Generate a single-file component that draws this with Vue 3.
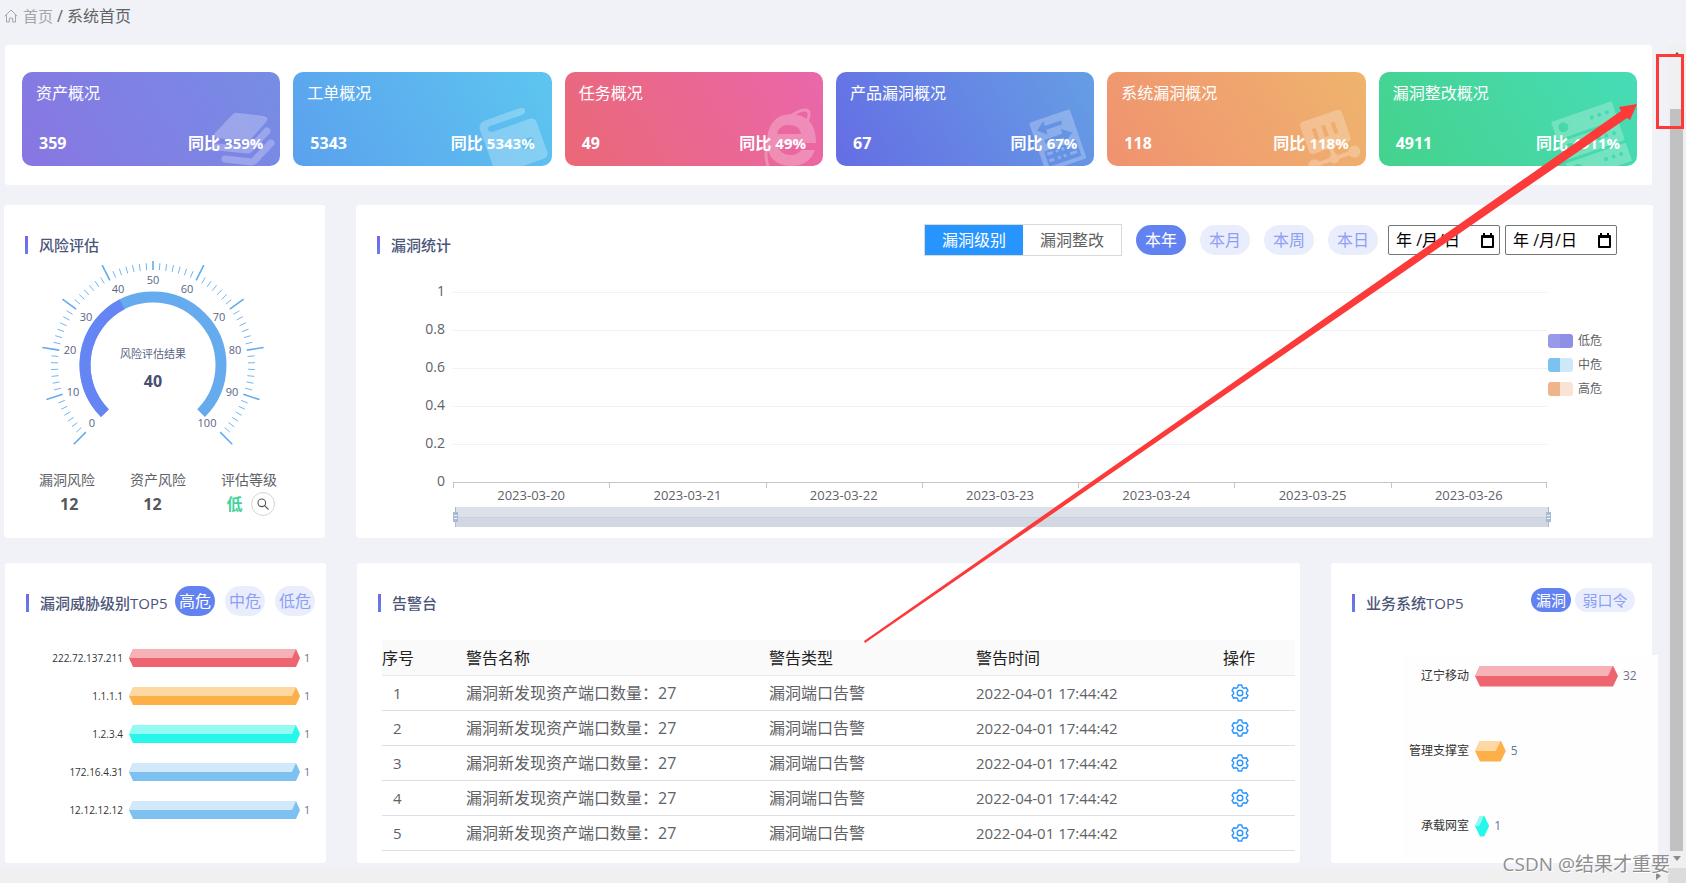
<script setup>
import { ref } from 'vue'

const cards = [
  { key: 'asset', title: '资产概况', value: 359 },
  { key: 'order', title: '工单概况', value: 5343 },
  { key: 'task', title: '任务概况', value: 49 },
  { key: 'product', title: '产品漏洞概况', value: 67 },
  { key: 'system', title: '系统漏洞概况', value: 118 },
  { key: 'fix', title: '漏洞整改概况', value: 4911 },
]

const CX = 149
const CY = 111
const polar = (r, value) => {
  const a = ((135 + value * 2.7) * Math.PI) / 180
  return [CX + r * Math.cos(a), CY + r * Math.sin(a)]
}
const arc = (from, to) => {
  const [x1, y1] = polar(68, from)
  const [x2, y2] = polar(68, to)
  const large = (to - from) * 2.7 > 180 ? 1 : 0
  return `M${x1} ${y1}A68 68 0 ${large} 1 ${x2} ${y2}`
}
const ticks = Array.from({ length: 71 }, (_, i) => {
  const major = i % 7 === 0
  const v = (i * 10) / 7
  const [x1, y1] = polar(95, v)
  const [x2, y2] = polar(major ? 112 : 102, v)
  return { x1, y1, x2, y2, major }
})
const gaugeLabels = [
  [0, 88, 173], [10, 69, 142], [20, 66, 100], [30, 82, 67], [40, 114, 39], [50, 149, 30],
  [60, 183, 39], [70, 215, 67], [80, 231, 100], [90, 228, 142], [100, 203, 173],
]

const yLabels = ['1', '0.8', '0.6', '0.4', '0.2', '0']
const dates = ['2023-03-20', '2023-03-21', '2023-03-22', '2023-03-23', '2023-03-24', '2023-03-25', '2023-03-26']
const legend = [
  { name: '低危', cls: 'low' },
  { name: '中危', cls: 'mid' },
  { name: '高危', cls: 'high' },
]

const statTab = ref('漏洞级别')
const period = ref('本年')
const level = ref('高危')
const bizTab = ref('漏洞')
const startDate = ref('年 /月/日')
const endDate = ref('年 /月/日')

const threats = [
  { name: '222.72.137.211', value: 1, cls: 'red' },
  { name: '1.1.1.1', value: 1, cls: 'orange' },
  { name: '1.2.3.4', value: 1, cls: 'cyan' },
  { name: '172.16.4.31', value: 1, cls: 'blue' },
  { name: '12.12.12.12', value: 1, cls: 'blue' },
]
const systems = [
  { name: '辽宁移动', value: 32, cls: 'red' },
  { name: '管理支撑室', value: 5, cls: 'orange' },
  { name: '承载网室', value: 1, cls: 'cyan' },
]
const alarms = [1, 2, 3, 4, 5].map((no) => ({
  no,
  name: '漏洞新发现资产端口数量：27',
  type: '漏洞端口告警',
  time: '2022-04-01 17:44:42',
}))
</script>

<template>
  <div class="page">
    <nav class="crumbs">
      <a href="#" class="home">
        <svg width="14" height="14" viewBox="0 0 14 14" fill="none" stroke="currentColor" stroke-width="1">
          <path d="M.7 7.2 7 1l6.300 6.200M2.500 6v7h2.800V9.200h3.400M8.700 9.200V13h2.800V6" />
        </svg>
        <span>首页</span>
      </a>
      <span class="slash">/</span>
      <span class="current">系统首页</span>
    </nav>

    <div class="body">
      <main class="content">
        <section class="panel overview">
          <article v-for="c in cards" :key="c.key" class="card" :class="c.key">
            <h3>{{ c.title }}</h3>
            <div class="figures">
              <strong>{{ c.value }}</strong>
              <b>同比 <span>{{ c.value }}%</span></b>
            </div>
            <svg class="mark" width="80" height="70" viewBox="0 0 80 70" fill="#fff">
              <g v-if="c.key === 'asset'">
                <path d="M38 17 64 20Q70 22 66 26L51 43Q49 46 45 45L17 42Q12 41 15 37L32 19Q34 16 38 17Z" />
                <path d="M18 51 47 54Q49 54 51 52L67 35M25 63 51 66Q53 66 55 64L71 47" fill="none" stroke="#fff" stroke-width="7" stroke-linecap="round" stroke-linejoin="round" />
              </g>
              <g v-else-if="c.key === 'order'">
                <path fill-rule="evenodd" d="M8 34Q6 28 12 25L48 12Q52 11 53 14T50 19L18 30Q15 32 16 34T20 36L57 23Q63 21 65 27L75 55Q77 61 71 63L51 70H21ZM50 45Q48 49 51 52T58 52L63 50 60 41 53 43Q51 43 50 45Z" />
              </g>
              <g v-else-if="c.key === 'task'">
                <path fill-rule="evenodd" d="M73 47H34Q36 59 48 59 55 59 58 54H72Q66 70 48 70 24 69 24 45 25 19 48 18 73 19 73 47ZM34 38H58Q57 29 46 29T34 38Z" />
                <path d="M25 70Q18 50 35 32T62 14Q69 14 64 26" fill="none" stroke="#fff" stroke-width="3" />
              </g>
              <g v-else-if="c.key === 'product'">
                <mask id="productCut" maskUnits="userSpaceOnUse" x="-10" y="-10" width="100" height="90">
                  <rect x="-10" y="-10" width="100" height="90" fill="#fff" />
                  <g fill="#000">
                    <path d="M5 10 14 3V8H31V12H14V17ZM38 23 28 16V21H9V25H28V30Z" />
                    <path d="M5 32H39V48H5Z" />
                  </g>
                  <g fill="#fff">
                    <rect x="7" y="34" width="6" height="3" /><rect x="16" y="34" width="3" height="3" /><rect x="22" y="34" width="3" height="3" /><rect x="28" y="34" width="8" height="3" />
                    <rect x="7" y="41" width="5" height="3" /><rect x="16" y="41" width="3" height="3" /><rect x="22" y="41" width="3" height="3" /><rect x="29" y="41" width="7" height="3" />
                  </g>
                </mask>
                <g transform="translate(15 27) rotate(-19)">
                  <rect width="43" height="52" rx="2" mask="url(#productCut)" />
                </g>
              </g>
              <g v-else-if="c.key === 'system'">
                <g transform="translate(13 27) rotate(-19)">
                  <path fill-rule="evenodd" d="M4 0H40Q44 0 44 4V30Q44 34 40 34H4Q0 34 0 30V4Q0 0 4 0ZM10 10V22H14V10ZM20 10V22H24V10ZM30 10V22H34V10Z" />
                  <path d="M20 34H24V43H46V47H-2V43H20Z" />
                  <circle cx="22" cy="45" r="5" /><circle cx="43" cy="45" r="6" /><circle cx="1" cy="45" r="6" />
                </g>
              </g>
              <g v-else>
                <mask id="fixCut" maskUnits="userSpaceOnUse" x="-10" y="-10" width="100" height="90">
                  <rect x="-10" y="-10" width="100" height="90" fill="#fff" />
                  <g v-for="y in [9, 31, 53]" :key="y" fill="#000">
                    <circle cx="10" :cy="y" r="5" />
                    <circle cx="40" :cy="y" r="2" /><circle cx="48" :cy="y" r="2" /><circle cx="56" :cy="y" r="2" />
                  </g>
                </mask>
                <g transform="translate(-6 26) rotate(-19)">
                  <g mask="url(#fixCut)">
                    <rect width="64" height="19" rx="1" /><rect y="22" width="64" height="19" rx="1" /><rect y="44" width="64" height="19" rx="1" />
                  </g>
                </g>
              </g>
            </svg>
          </article>
        </section>

        <div class="row stats-row">
          <section class="panel">
            <header class="head"><h2>风险评估</h2></header>
            <svg class="gauge" width="321" height="200" viewBox="0 0 321 200">
              <clipPath id="gaugeClip"><rect y="7" width="321" height="193" /></clipPath>
              <g clip-path="url(#gaugeClip)">
                <line v-for="(t, i) in ticks" :key="i" :x1="t.x1" :y1="t.y1" :x2="t.x2" :y2="t.y2" stroke="#63abee" :stroke-width="t.major ? 1.6 : 0.9" />
              </g>
              <path :d="arc(0, 100)" fill="none" stroke="#65abee" stroke-width="11" />
              <path :d="arc(0, 40)" fill="none" stroke="#6485f3" stroke-width="11" />
              <text v-for="l in gaugeLabels" :key="l[0]" :x="l[1]" :y="l[2]" class="scale">{{ l[0] }}</text>
              <text x="149" y="104" class="scale">风险评估结果</text>
              <text x="149" y="133" class="result">40</text>
            </svg>
            <div class="risk-names"><span>漏洞风险</span><span>资产风险</span><span>评估等级</span></div>
            <div class="risk-values">
              <b>12</b><b>12</b>
              <div class="grade">
                <b>低</b>
                <button type="button" aria-label="查看">
                  <svg width="12" height="12" viewBox="0 0 12 12" fill="none" stroke="#555" stroke-width="1.100">
                    <circle cx="4.800" cy="4.800" r="3.800" /><path d="M7.600 7.600 11.500 11.500" />
                  </svg>
                </button>
              </div>
            </div>
          </section>

          <section class="panel">
            <header class="head">
              <h2>漏洞统计</h2>
              <div class="controls">
                <div class="tabs">
                  <button v-for="t in ['漏洞级别', '漏洞整改']" :key="t" type="button" :class="{ on: statTab === t }" @click="statTab = t">{{ t }}</button>
                </div>
                <div class="pills wide">
                  <button v-for="p in ['本年', '本月', '本周', '本日']" :key="p" type="button" :class="{ on: period === p }" @click="period = p">{{ p }}</button>
                </div>
                <div class="dates">
                  <label class="date">
                    <input v-model="startDate" type="text" aria-label="开始日期" />
                    <svg width="13" height="15" viewBox="0 0 13 15"><path fill-rule="evenodd" d="M2 0H4V2H9V0H11V2H12Q13 2 13 3V14Q13 15 12 15H1Q0 15 0 14V3Q0 2 1 2H2ZM2 5V13H11V5Z" /></svg>
                  </label>
                  <label class="date">
                    <input v-model="endDate" type="text" aria-label="结束日期" />
                    <svg width="13" height="15" viewBox="0 0 13 15"><path fill-rule="evenodd" d="M2 0H4V2H9V0H11V2H12Q13 2 13 3V14Q13 15 12 15H1Q0 15 0 14V3Q0 2 1 2H2ZM2 5V13H11V5Z" /></svg>
                  </label>
                </div>
              </div>
            </header>
            <div class="chart">
              <div class="y-axis"><span v-for="y in yLabels" :key="y">{{ y }}</span></div>
              <div class="plot">
                <div class="grid"><i v-for="n in 5" :key="n"></i></div>
                <div class="x-axis"><span v-for="d in dates" :key="d">{{ d }}</span></div>
                <div class="zoom"><i></i><i></i></div>
              </div>
              <ul class="legend">
                <li v-for="l in legend" :key="l.name"><i :class="l.cls"></i>{{ l.name }}</li>
              </ul>
            </div>
          </section>
        </div>

        <div class="row bottom-row">
          <section class="panel">
            <header class="head">
              <h2>漏洞威胁级别TOP5</h2>
              <div class="pills threat">
                <button v-for="p in ['高危', '中危', '低危']" :key="p" type="button" :class="{ on: level === p }" @click="level = p">{{ p }}</button>
              </div>
            </header>
            <div class="threats">
              <div v-for="t in threats" :key="t.name" class="threat-row">
                <span class="name">{{ t.name }}</span>
                <i class="bar" :class="t.cls"></i>
                <span class="val">{{ t.value }}</span>
              </div>
            </div>
          </section>

          <section class="panel">
            <header class="head"><h2>告警台</h2></header>
            <div class="table-box">
              <table>
                <colgroup><col class="c1" /><col class="c2" /><col class="c3" /><col class="c4" /><col class="c5" /></colgroup>
                <thead>
                  <tr><th>序号</th><th>警告名称</th><th>警告类型</th><th>警告时间</th><th>操作</th></tr>
                </thead>
                <tbody>
                  <tr v-for="a in alarms" :key="a.no">
                    <td class="no">{{ a.no }}</td>
                    <td>{{ a.name }}</td>
                    <td>{{ a.type }}</td>
                    <td class="time">{{ a.time }}</td>
                    <td class="op">
                      <button type="button" aria-label="设置">
                        <svg width="18" height="18" viewBox="0 0 18 18" fill="none" stroke="#2b95ff" stroke-width="1.400" stroke-linejoin="round">
                          <path d="M7.300 1H10.700L11.300 3.300 13 4.300 15.300 3.700 17 6.600 15.400 8.200V9.800L17 11.400 15.300 14.300 13 13.700 11.300 14.700 10.700 17H7.300L6.700 14.700 5 13.700 2.700 14.300 1 11.400 2.600 9.800V8.200L1 6.600 2.700 3.700 5 4.300 6.700 3.300Z" />
                          <circle cx="9" cy="9" r="2.800" />
                        </svg>
                      </button>
                    </td>
                  </tr>
                </tbody>
              </table>
            </div>
          </section>

          <section class="panel">
            <header class="head">
              <h2>业务系统TOP5</h2>
              <div class="pills biz">
                <button v-for="p in ['漏洞', '弱口令']" :key="p" type="button" :class="{ on: bizTab === p }" @click="bizTab = p">{{ p }}</button>
              </div>
            </header>
            <div class="systems">
              <div v-for="s in systems" :key="s.name" class="system-row">
                <span class="name">{{ s.name }}</span>
                <div class="track">
                  <i class="bar" :class="s.cls" :style="{ width: `calc(10px + (100% - 10px) * ${s.value / 32})` }"></i>
                  <span class="val">{{ s.value }}</span>
                </div>
              </div>
            </div>
          </section>
        </div>
      </main>

      <div class="scroll-y">
        <svg width="8" height="5" viewBox="0 0 8 5"><path d="M4 0 8 5H0Z" fill="#505050" /></svg>
        <div class="thumb"></div>
        <svg width="8" height="5" viewBox="0 0 8 5"><path d="M4 5 0 0H8Z" fill="#8c8c8c" /></svg>
      </div>
    </div>

    <div class="scroll-x">
      <svg width="5" height="8" viewBox="0 0 5 8"><path d="M5 4 0 8V0Z" fill="#8c8c8c" /></svg>
      <div class="corner"></div>
    </div>

    <svg class="annotation" viewBox="0 0 1686 883" preserveAspectRatio="none">
      <path d="M864 641 1621 111 1619 107 1637 104 1630 120 1627 118 865 643Z" fill="#fb3a39" />
      <rect x="1657.500" y="55.500" width="25" height="72" fill="none" stroke="#fb3a39" stroke-width="3" />
    </svg>
    <div class="watermark">CSDN @结果才重要</div>
  </div>
</template>

<style>
body {
  background: #f0f2f7;
}
</style>

<style scoped>
* {
  box-sizing: border-box;
}
.page {
  position: relative;
  display: flex;
  flex-direction: column;
  min-height: 100vh;
  overflow: hidden;
  background: #f0f2f7;
  color: #606266;
  font: 16px/20px "Open Sans", "Noto Sans CJK SC", sans-serif;
}
h2, h3, ul {
  margin: 0;
  padding: 0;
  list-style: none;
}
button {
  margin: 0;
  padding: 0;
  border: 0;
  background: none;
  font: inherit;
  color: inherit;
  cursor: pointer;
}
svg {
  display: block;
}
.crumbs {
  display: flex;
  align-items: center;
  gap: 4px;
  height: 45px;
  padding: 0 4px 13px;
}
.home {
  display: flex;
  align-items: center;
  gap: 5px;
  color: #a3a5a9;
  font-size: 15px;
  text-decoration: none;
}
.body {
  display: flex;
  flex: 1;
}
.content {
  flex: 1;
  min-width: 0;
  padding: 0 15px 5px 4px;
}
.panel {
  min-width: 0;
  background: #fff;
  border-radius: 3px;
}
.overview {
  display: grid;
  grid-template-columns: repeat(6, 1fr);
  gap: 13px;
  margin: 0 1px 20px;
  padding: 27px 15px 19px 17px;
}
.card {
  position: relative;
  display: flex;
  flex-direction: column;
  justify-content: space-between;
  height: 94px;
  padding: 11px 17px 13px 14px;
  overflow: hidden;
  border-radius: 10px;
  color: #fff;
}
.card h3 {
  font-size: 16px;
  font-weight: 400;
}
.figures {
  display: flex;
  justify-content: space-between;
  padding-left: 3px;
}
.figures span {
  font-size: 15px;
}
.mark {
  position: absolute;
  right: 0;
  bottom: 0;
  overflow: visible;
  opacity: 0.25;
}
.asset { background: linear-gradient(60deg, #8876e2, #768de5); }
.order { background: linear-gradient(60deg, #5ba1ee, #5dc6ef); }
.task { background: linear-gradient(60deg, #ea6876, #ea67ab); }
.product { background: linear-gradient(60deg, #656de4, #659ee4); }
.system { background: linear-gradient(60deg, #f09270, #efb46d); }
.fix { background: linear-gradient(60deg, #45d28c, #47dcb7); }

.row {
  display: grid;
  column-gap: 31px;
}
.stats-row {
  grid-template-columns: 321fr 1297fr;
  min-height: 333px;
  margin-bottom: 25px;
}
.bottom-row {
  grid-template-columns: 321fr 943fr 321fr;
  min-height: 300px;
  padding: 0 1px;
}
.head {
  display: flex;
  align-items: flex-start;
  padding: 19px 0 0 21px;
}
.head h2 {
  display: flex;
  align-items: center;
  gap: 11px;
  height: 18px;
  margin-top: 12px;
  color: #4b5578;
  font-size: 15px;
  line-height: 16px;
  font-weight: 500;
  white-space: nowrap;
}
.head h2::before {
  content: "";
  width: 3px;
  height: 18px;
  background: linear-gradient(#7765e9, #607fee);
}
.scale {
  fill: #5a6484;
  font-size: 11px;
  text-anchor: middle;
}
.result {
  fill: #464e72;
  font-size: 16px;
  font-weight: 700;
  text-anchor: middle;
}
.risk-names {
  display: flex;
  gap: 35px;
  padding: 16px 0 0 35px;
  font-size: 14px;
}
.risk-values {
  display: flex;
  align-items: center;
  gap: 65px;
  height: 28px;
  padding-left: 56px;
  color: #55575c;
}
.grade {
  display: flex;
  align-items: center;
  gap: 8px;
}
.grade b {
  color: #43d39a;
}
.grade button {
  display: grid;
  place-items: center;
  width: 24px;
  height: 24px;
  border: 1px solid #d4d4d4;
  border-radius: 50%;
}
.controls {
  display: flex;
  align-items: center;
  margin-left: auto;
  padding-right: 36px;
}
.tabs {
  display: flex;
  border: 1px solid #d9d9d9;
}
.tabs button {
  width: 98px;
  height: 30px;
}
.tabs .on {
  background: #2695ff;
  color: #fff;
}
.pills {
  display: flex;
}
.pills button {
  height: 30px;
  border-radius: 15px;
  background: #eaeefc;
  color: #8a9ff5;
}
.pills .on {
  background: #6382f1;
  color: #fff;
}
.wide {
  gap: 14px;
  margin: 0 10px 0 14px;
}
.wide button {
  width: 50px;
}
.dates {
  display: flex;
  gap: 5px;
}
.date {
  display: flex;
  align-items: center;
  width: 112px;
  height: 30px;
  padding: 0 5px 0 7px;
  border: 1px solid #767676;
  border-radius: 2px;
  background: #fff;
}
.date input {
  flex: 1;
  min-width: 0;
  padding: 0;
  border: 0;
  outline: 0;
  background: none;
  color: #000;
  font: inherit;
}
.chart {
  display: grid;
  grid-template-columns: 97px 1fr 106px;
  margin-top: 36px;
}
.y-axis {
  display: flex;
  flex-direction: column;
  justify-content: space-between;
  height: 210px;
  margin-top: -11px;
  padding-right: 8px;
  font-size: 14px;
  text-align: right;
}
.grid {
  border-bottom: 1px solid #c4c6ca;
}
.grid i {
  display: block;
  height: 38px;
  border-top: 1px solid #f2f2f3;
}
.x-axis {
  display: flex;
  height: 24px;
}
.x-axis span {
  flex: 1;
  padding-top: 4px;
  background: linear-gradient(#c4c6ca, #c4c6ca) left top / 1px 5px no-repeat;
  font-size: 13px;
  line-height: 16px;
  text-align: center;
}
.x-axis span:last-child {
  background: linear-gradient(#c4c6ca, #c4c6ca) left top / 1px 5px no-repeat, linear-gradient(#c4c6ca, #c4c6ca) right top / 1px 5px no-repeat;
}
.zoom {
  display: flex;
  justify-content: space-between;
  height: 20px;
  margin-right: -4px;
  background: linear-gradient(#dce0e9 50%, #c6d1dd 50%, #c6d1dd 55%, #d1d8e1 55%) 2px 0 / calc(100% - 4px) 100% no-repeat;
}
.zoom i {
  width: 5px;
  background:
    linear-gradient(#f4f7fa, #f4f7fa) 50% 8px / 3px 1px no-repeat,
    linear-gradient(#f4f7fa, #f4f7fa) 50% 11px / 3px 1px no-repeat,
    linear-gradient(#a9bbd2, #a9bbd2) center / 5px 10px no-repeat,
    linear-gradient(#a9bbd2, #a9bbd2) center / 1px 100% no-repeat;
}
.legend {
  display: flex;
  flex-direction: column;
  gap: 10px;
  padding: 42px 0 0 1px;
}
.legend li {
  display: flex;
  align-items: center;
  gap: 5px;
  height: 14px;
  font-size: 12px;
  line-height: 14px;
}
.legend i {
  width: 25px;
  height: 14px;
  border-radius: 3px;
}
.low { background: linear-gradient(90deg, #979ae9 50%, #8d90e6 50%); }
.mid { background: linear-gradient(90deg, #7cc2f0 50%, #cfe8f9 50%); }
.high { background: linear-gradient(90deg, #f0b48a 50%, #f9e3d5 50%); }

.threat {
  gap: 10px;
  margin: 4px 11px 0 auto;
}
.threat button {
  width: 40px;
}
.biz {
  gap: 4px;
  margin: 6px 17px 0 auto;
}
.biz button {
  width: 60px;
  height: 24px;
  border-radius: 12px;
  font-size: 15px;
}
.biz button:first-child {
  width: 40px;
}
.threats {
  padding-top: 23px;
}
.threat-row {
  display: grid;
  grid-template-columns: 118px 1fr 26px;
  align-items: center;
  height: 38px;
  font-size: 10px;
}
.name {
  color: #333;
  text-align: right;
}
.val {
  padding-left: 4px;
  color: #6b7390;
  font-size: 11px;
}
.bar {
  --tip: 4px;
  display: block;
  height: 18px;
  clip-path: polygon(var(--tip) 0, calc(100% - var(--tip)) 0, 100% 50%, calc(100% - var(--tip)) 100%, var(--tip) 100%, 0 50%);
}
.threat-row .bar {
  margin-left: 6px;
}
.bar::before {
  content: "";
  display: block;
  height: 50%;
  background: rgba(255, 255, 255, 0.5);
  clip-path: polygon(var(--tip) 0, calc(100% - var(--tip)) 0, calc(100% - var(--tip) * 2) 100%, 0 100%);
}
.red { background: #ee6570; }
.orange { background: #fcb047; }
.cyan { background: #27f7e9; }
.blue { background: #7cc1f0; }
.blue::before { background: rgba(255, 255, 255, 0.65); }

.systems {
  display: flex;
  flex-direction: column;
  gap: 33px;
  margin: 43px -6px 0 72px;
  padding-bottom: 10px;
  background: #fefefe;
}
.system-row {
  display: grid;
  grid-template-columns: 66px 1fr;
  gap: 6px;
  align-items: center;
  height: 42px;
  padding-right: 40px;
  font-size: 12px;
}
.track {
  display: flex;
  align-items: center;
}
.track .bar {
  --tip: 5px;
  flex: none;
  height: 21px;
}
.track .val {
  padding-left: 5px;
  font-size: 12px;
}
.system-row .name {
  white-space: nowrap;
}

.table-box {
  padding: 28px 5px 0 25px;
}
table {
  width: 100%;
  table-layout: fixed;
  border-collapse: separate;
  border-spacing: 0;
}
.c1 { width: 84px; }
.c2 { width: 303px; }
.c3 { width: 207px; }
.c4 { width: 247px; }
.c5 { width: 72px; }
th, td {
  height: 35px;
  padding: 0;
  border-bottom: 1px solid #dcdfe6;
  text-align: left;
  white-space: nowrap;
}
th {
  height: 36px;
  border-color: #e8eaec;
  background: #fafafa;
  color: #222;
  font-weight: 400;
}
.no {
  padding-left: 11px;
}
.no, .time {
  font-size: 15px;
}
.op {
  padding-left: 8px;
}
.op button {
  display: block;
}
.scroll-y {
  display: flex;
  flex-direction: column;
  align-items: center;
  justify-content: space-between;
  width: 18px;
  padding: 7px 3px 7px 2px;
  background: #f0f0f0;
}
.thumb {
  flex: 1;
  width: 13px;
  margin: 52px 0 5px;
  background: #c1c1c1;
}
.scroll-x {
  display: flex;
  align-items: center;
  justify-content: flex-end;
  gap: 7px;
  height: 15px;
  background: #f0f0f0;
}
.corner {
  width: 18px;
  height: 15px;
  background: #dcdcdc;
}
.annotation {
  position: absolute;
  inset: 0;
  width: 100%;
  height: 100%;
  pointer-events: none;
}
.watermark {
  position: absolute;
  right: 16px;
  bottom: 9px;
  color: #8f8f8f;
  font-size: 19px;
  text-shadow: 1px 1px 0 #fff;
  pointer-events: none;
}
</style>
